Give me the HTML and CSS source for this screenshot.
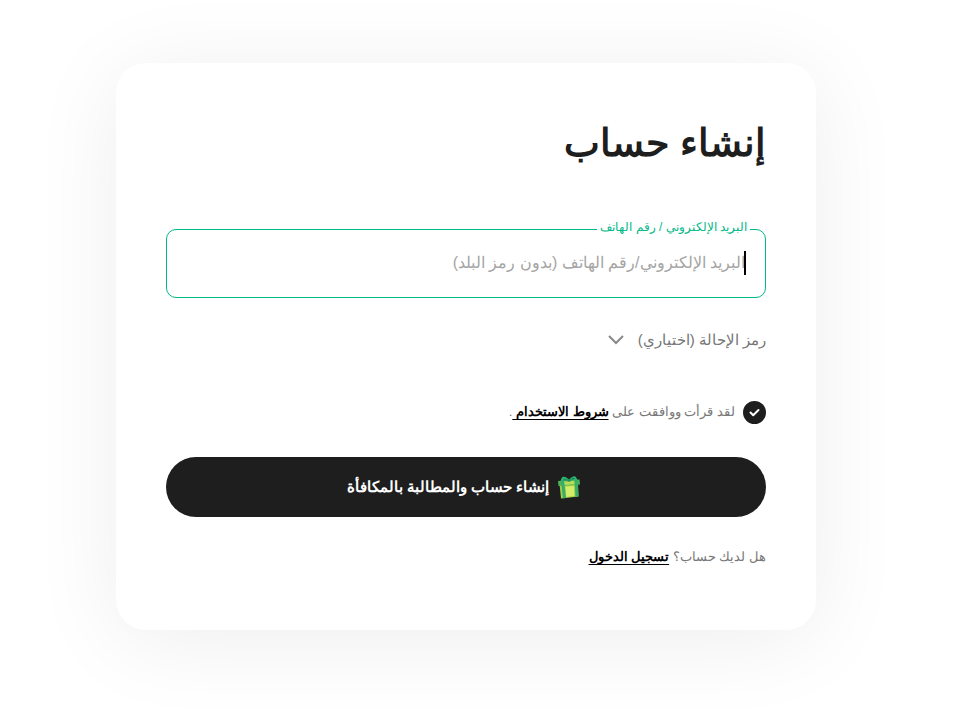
FILE: index.html
```html
<!DOCTYPE html>
<html lang="ar" dir="rtl">
<head>
<meta charset="utf-8">
<title>إنشاء حساب</title>
<link rel="stylesheet" href="styles.css">
</head>
<body>
<main class="card">
  <h1 class="title">إنشاء حساب</h1>
  <form class="form">
    <div class="field">
      <label class="field-label" for="account">البريد الإلكتروني / رقم الهاتف</label>
      <input class="field-input" id="account" type="text" placeholder="البريد الإلكتروني/رقم الهاتف (بدون رمز البلد)">
      <span class="caret" aria-hidden="true"></span>
    </div>
    <button class="referral" type="button">
      <span>رمز الإحالة (اختياري)</span>
      <svg class="chevron" viewBox="0 0 16 10" aria-hidden="true"><path d="M1 1l7 7 7-7"/></svg>
    </button>
    <div class="terms">
      <span class="check">
        <input class="check-input" id="terms" type="checkbox" checked>
        <svg class="check-mark" viewBox="0 0 23 23" aria-hidden="true"><path d="M7.500 11.5l2.700 2.700 5.300-5.200"/></svg>
      </span>
      <p class="terms-text"><label for="terms">لقد قرأت ووافقت على</label> <a class="link" href="#terms">شروط الاستخدام </a>.</p>
    </div>
    <button class="submit" type="submit">
      <svg class="gift" viewBox="0 0 24 24" aria-hidden="true">
        <path fill="#9fce48" d="M2.500 9L21 8l.5 13.500L4 23.500z"/>
        <path fill="#d5ec68" d="M8.500 11.500l8.500-.5.4 10-8.200 1z"/>
        <path fill="#4fb35a" d="M1 6l21.500-1.500.5 5L1.500 11z"/>
        <path fill="#b5dc5a" d="M7 6.500l10.500-.7.3 3.500-10.500.7z"/>
        <path fill="#35ae6b" d="M4 6l3-.2L9 23l-3 .3zM17.600 5l3-.2.8 16.700-3 .3z"/>
        <path fill="#2db46f" d="M12 4.800C9 1.500 6 1 4.500 3.200L3.500 6l8.500-.5zM12 4.800c3-4 6-4.500 7-2.500L20.500 5 12 5.500z"/>
        <path fill="#19704a" d="M6 4.300c1-1.300 3-.4 4 .7zM14 4.800c1-1.600 3-2.300 4-1z"/>
        <path fill="#208d58" d="M10.500 3.800h3v2.800h-3z"/>
      </svg>
      <span>إنشاء حساب والمطالبة بالمكافأة</span>
    </button>
  </form>
  <p class="login">هل لديك حساب؟ <a class="link" href="#login">تسجيل الدخول</a></p>
</main>
</body>
</html>
```
FILE: styles.css
```css
* { box-sizing: border-box; }
body { margin: 0; padding: 63px 161px 92px 116px; background: #fff; color: #1e1e1e; font-family: "Liberation Sans", Arial, sans-serif; }
.card { max-width: 700px; padding: 50px 50px 61px; border-radius: 30px; background: #fff; box-shadow: 0 10px 90px rgba(0, 10, 5, 0.07); }
.title { margin: 0; font-size: 38px; line-height: 60px; }
.form { display: flex; flex-direction: column; align-items: flex-start; margin-top: 56px; }
.field { position: relative; width: 100%; }
.field-label { position: absolute; top: -10px; right: 16px; padding: 0 3px; background: #fff; color: #00b887; font-size: 12px; line-height: 16px; }
.field-input { display: block; width: 100%; height: 69px; padding: 0 20px 2px; border: 1px solid #00b887; border-radius: 10px; background: #fff; font: inherit; font-size: 16px; outline: none; }
.field-input::placeholder { color: #a5a5a5; opacity: 1; }
.caret { position: absolute; top: 22px; right: 20px; width: 2px; height: 24px; background: #000; }
.referral { display: flex; align-items: center; gap: 14px; margin-top: 30px; padding: 0; border: 0; background: none; color: #777; font: inherit; font-size: 15px; line-height: 24px; }
.chevron { width: 16px; height: 10px; fill: none; stroke: #888; stroke-width: 2; }
.terms { display: flex; align-items: center; gap: 8px; margin-top: 48px; }
.check { display: grid; width: 23px; height: 23px; }
.check-input, .check-mark { grid-area: 1 / 1; width: 23px; height: 23px; margin: 0; }
.check-input { appearance: none; border-radius: 50%; background: #1e1e1e; }
.check-mark { fill: none; stroke: #fff; stroke-width: 2; stroke-linecap: round; stroke-linejoin: round; pointer-events: none; }
.terms-text { margin: 0; color: #777; font-size: 13px; line-height: 24px; }
.link { color: #000; font-weight: bold; text-underline-offset: 3px; }
.submit { display: flex; align-items: center; justify-content: center; gap: 8px; width: 100%; height: 60px; margin-top: 33px; border: 0; border-radius: 30px; background: #1e1e1e; color: #fff; font: inherit; font-size: 15px; font-weight: bold; }
.gift { width: 24px; height: 24px; margin-inline-start: 4px; }
.login { margin: 28px 0 0; color: #777; font-size: 13px; line-height: 24px; }
```
